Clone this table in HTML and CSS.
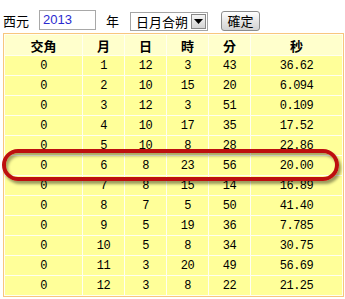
FILE: index.html
```html
<!DOCTYPE html>
<html>
<head>
<meta charset="utf-8">
<link rel="stylesheet" href="styles.css">
</head>
<body>
<div class="toolbar">
  <span class="label">西元</span>
  <div class="year-input">2013</div>
  <span class="label nian">年</span>
  <div class="select">
    <span class="select-text">日月合朔</span>
    <span class="select-btn"><svg width="9" height="5" viewBox="0 0 9 5"><path d="M0 0H9L4.5 5Z" fill="#000"/></svg></span>
  </div>
  <div class="btn">確定</div>
</div>
<div class="table-wrap">
  <table class="data">
    <thead>
      <tr><th class="c1">交角</th><th class="c2">月</th><th class="c2">日</th><th class="c2">時</th><th class="c2">分</th><th class="c6">秒</th></tr>
    </thead>
    <tbody>
      <tr><td>0</td><td>1</td><td>12</td><td>3</td><td>43</td><td>36.62</td></tr>
      <tr><td>0</td><td>2</td><td>10</td><td>15</td><td>20</td><td>6.094</td></tr>
      <tr><td>0</td><td>3</td><td>12</td><td>3</td><td>51</td><td>0.109</td></tr>
      <tr><td>0</td><td>4</td><td>10</td><td>17</td><td>35</td><td>17.52</td></tr>
      <tr><td>0</td><td>5</td><td>10</td><td>8</td><td>28</td><td>22.86</td></tr>
      <tr><td>0</td><td>6</td><td>8</td><td>23</td><td>56</td><td>20.00</td></tr>
      <tr><td>0</td><td>7</td><td>8</td><td>15</td><td>14</td><td>16.89</td></tr>
      <tr><td>0</td><td>8</td><td>7</td><td>5</td><td>50</td><td>41.40</td></tr>
      <tr><td>0</td><td>9</td><td>5</td><td>19</td><td>36</td><td>7.785</td></tr>
      <tr><td>0</td><td>10</td><td>5</td><td>8</td><td>34</td><td>30.75</td></tr>
      <tr><td>0</td><td>11</td><td>3</td><td>20</td><td>49</td><td>56.69</td></tr>
      <tr><td>0</td><td>12</td><td>3</td><td>8</td><td>22</td><td>21.25</td></tr>
    </tbody>
  </table>
  <div class="highlight"></div>
</div>
</body>
</html>
```

FILE: styles.css
```css
html, body {
  margin: 0;
  padding: 0;
  background: #fff;
}
body {
  font-family: "Noto Sans CJK TC", "Liberation Sans", sans-serif;
  font-size: 13px;
  color: #000;
}
.toolbar {
  display: flex;
  align-items: center;
  height: 22px;
  padding: 9px 0 0 3px;
}
.label {
  line-height: 1;
}
.year-input {
  box-sizing: border-box;
  margin-left: 10px;
  width: 57px;
  height: 20px;
  border: 1px solid #a8a8a8;
  font-family: "Liberation Sans", Arial, sans-serif;
  font-size: 13px;
  line-height: 18px;
  padding-left: 3px;
  color: #2a2ad0;
}
.nian {
  margin-left: 10px;
}
.select {
  box-sizing: border-box;
  margin-left: 11px;
  width: 78px;
  height: 19px;
  margin-top: 2px;
  border: 1px solid #a5a5a5;
  display: flex;
  align-items: center;
  padding-left: 5px;
}
.select-text {
  font-size: 13px;
  line-height: 1;
}
.select-btn {
  margin-left: auto;
  margin-right: 1px;
  width: 15px;
  height: 15px;
  box-sizing: border-box;
  border: 1px solid #888;
  background: linear-gradient(#f4f4f4, #d4d4d4);
  display: flex;
  align-items: center;
  justify-content: center;
}
.btn {
  box-sizing: border-box;
  margin-left: 13px;
  margin-top: 1px;
  width: 39px;
  height: 20px;
  border: 1px solid #8c8c8c;
  border-radius: 3px;
  background: linear-gradient(#ffffff, #e6e6e6 50%, #d2d2d2);
  text-align: center;
  line-height: 18px;
  font-size: 13px;
}
.table-wrap {
  position: relative;
  margin: 2px 0 0 3px;
  width: 341px;
}
.data {
  border: 1px solid #f8c67e;
  border-spacing: 1px;
  background: #fffff0;
  width: 341px;
  table-layout: fixed;
}
.data th {
  background: #ffffcc;
  height: 20px;
  padding: 0;
  font-weight: bold;
  font-size: 13px;
  line-height: 1;
}
.data .c1 { width: 77px; }
.data .c2 { width: 41px; }
.data .c6 { width: 91px; }
.data td {
  background: #ffff99;
  height: 19px;
  padding: 0;
  text-align: center;
  font-family: "Liberation Mono", monospace;
  font-size: 12px;
  letter-spacing: -0.5px;
  line-height: 1;
}
.highlight {
  position: absolute;
  left: -1px;
  top: 116px;
  width: 337px;
  height: 32px;
  box-sizing: border-box;
  border: 4px solid #bd0f0f;
  border-radius: 16px;
  box-shadow: 2px 3px 3px rgba(0,0,0,0.4), inset 2px 3px 3px rgba(0,0,0,0.35);
}
```
